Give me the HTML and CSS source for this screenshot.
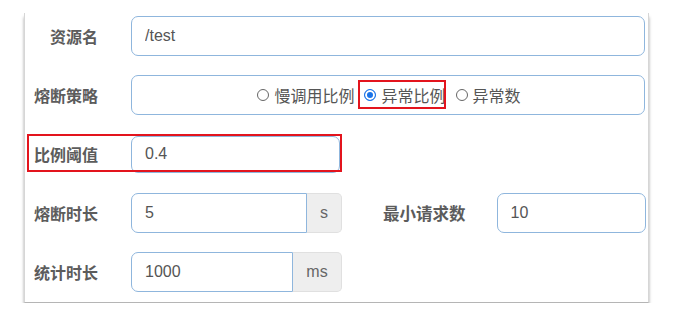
FILE: index.html
```
<!DOCTYPE html>
<html lang="zh-CN">
  <head>
    <meta charset="utf-8" />
    <title>熔断规则</title>
    <link rel="stylesheet" href="styles.css">
  </head>
  <body>
    <div class="panel">
      <div class="form-row">
        <label class="form-label">资源名</label>
        <input class="form-input full" type="text" value="/test" />
      </div>

      <div class="form-row">
        <label class="form-label">熔断策略</label>
        <div class="form-input full radio-box">
          <span class="radio"><span class="dot"></span>慢调用比例</span>
          <span class="radio checked"><span class="dot"></span>异常比例<span class="mark mark-radio"></span></span>
          <span class="radio"><span class="dot"></span>异常数</span>
        </div>
      </div>

      <div class="form-row">
        <label class="form-label">比例阈值</label>
        <input class="form-input ratio" type="text" value="0.4" />
        <span class="mark mark-row"></span>
      </div>

      <div class="form-row">
        <label class="form-label">熔断时长</label>
        <div class="input-group">
          <input class="form-input grouped w-5" type="text" value="5" />
          <span class="addon">s</span>
        </div>
        <label class="form-label side">最小请求数</label>
        <input class="form-input min-req" type="text" value="10" />
      </div>

      <div class="form-row">
        <label class="form-label">统计时长</label>
        <div class="input-group">
          <input class="form-input grouped w-1000" type="text" value="1000" />
          <span class="addon wide">ms</span>
        </div>
      </div>
    </div>
  </body>
</html>
```

FILE: styles.css
```
/* Page */
body {
  margin: 0;
  background: #fff;
  font-family: 'Liberation Sans', 'Noto Sans CJK SC', sans-serif;
  color: #555;
}

.panel {
  margin: 13px 0 0 24px;
  width: 623px;
  padding: 3px 0 10px;
  background: #fff;
  border-left: 1px solid #d6d6d6;
  border-right: 1px solid #d6d6d6;
  border-bottom: 1px solid #b5b5b5;
  box-shadow: 0 4px 3px rgba(0, 0, 0, 0.35);
  display: flex;
  flex-direction: column;
  gap: 19px;
}

/* Rows */
.form-row {
  display: flex;
  align-items: center;
  height: 40px;
  position: relative;
}

.form-label {
  width: 73px;
  margin-right: 33px;
  text-align: right;
  font-family: 'Noto Sans CJK SC', sans-serif;
  font-size: 16px;
  font-weight: 700;
  color: #5c5c5c;
  flex-shrink: 0;
}

.form-label.side {
  width: auto;
  margin: 0 31px 0 41px;
  font-size: 16.5px;
}

.form-input {
  box-sizing: border-box;
  height: 40px;
  padding: 0 13px;
  border: 1px solid #8fb6dd;
  border-radius: 7px;
  font-family: 'Liberation Sans', 'Noto Sans CJK SC', sans-serif;
  font-size: 16px;
  color: #555;
  background: #fff;
  outline: none;
}

.full {
  width: 514px;
}

.ratio {
  width: 209px;
  height: 37px;
}

.min-req {
  width: 149px;
}

/* Radios */
.radio-box {
  display: flex;
  align-items: center;
  justify-content: center;
  gap: 10px;
  padding: 0 0 0 2px;
  font-family: 'Noto Sans CJK SC', sans-serif;
  font-size: 16px;
  color: #555;
}

.radio {
  display: flex;
  align-items: center;
  gap: 5px;
  position: relative;
}

.dot {
  box-sizing: border-box;
  width: 12px;
  height: 12px;
  border: 1px solid #666;
  border-radius: 50%;
  background: #fff;
}

.checked .dot {
  border: 1px solid #1a73e8;
  box-shadow: inset 0 0 0 2px #fff;
  background: #1a73e8;
}

/* Input group */
.input-group {
  display: flex;
  height: 40px;
}

.grouped {
  border-radius: 7px 0 0 7px;
}

.w-5 {
  width: 176px;
}

.w-1000 {
  width: 162px;
}

.addon {
  box-sizing: border-box;
  width: 35px;
  display: flex;
  align-items: center;
  justify-content: center;
  background: #eee;
  border: 1px solid #e0e0e0;
  border-left: none;
  border-radius: 0 5px 5px 0;
  font-size: 16px;
  color: #666;
}

.addon.wide {
  width: 49px;
}

/* Red annotation boxes */
.mark {
  position: absolute;
  border: 2px solid #e3141d;
  pointer-events: none;
}

.mark-radio {
  left: -6px;
  top: -3px;
  width: 84px;
  height: 25px;
}

.mark-row {
  left: 2px;
  top: 0;
  width: 311px;
  height: 34px;
}
```
